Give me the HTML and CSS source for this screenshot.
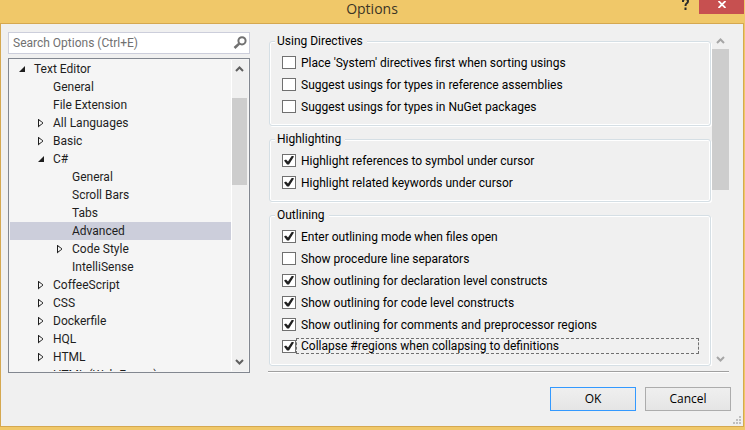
FILE: index.html
```html
<!DOCTYPE html>
<html lang="en">
<head>
<meta charset="utf-8">
<title>Options</title>
<link rel="stylesheet" href="styles.css">
</head>
<body>
<div class="window">
  <header class="titlebar">
    <h1 class="title">Options</h1>
    <div class="caption-buttons">
      <button class="help" type="button" aria-label="Help"><svg width="7" height="10" viewBox="0 0 7 10"><path d="M1 2V1Q1 -1 3.500 -1Q6 -1 6 1.200Q6 2.600 4.600 3.500Q3.500 4.200 3.500 6M3.500 7.500V10" fill="none" stroke="#2b2b2b" stroke-width="2"/></svg></button>
      <button class="close" type="button" aria-label="Close"><svg width="8" height="7" viewBox="0 0 8 7"><path d="M0.500 0L7.500 7M7.500 0L0.500 7" stroke="#fff" stroke-width="1.800"/></svg></button>
    </div>
  </header>
  <form class="client">
    <div class="columns">
      <div class="nav">
        <div class="search">
          <input class="search-input" type="text" placeholder="Search Options (Ctrl+E)" aria-label="Search Options">
          <svg class="search-icon" width="14" height="14" viewBox="0 0 14 14"><circle cx="9" cy="4.800" r="3.600" fill="none" stroke="#717171" stroke-width="2"/><path d="M6.200 7.600L1.500 12" stroke="#717171" stroke-width="2.600"/></svg>
        </div>
        <div class="tree">
          <ul class="items" role="tree">
            <li class="item l0 open" role="treeitem">Text Editor</li>
            <li class="item l1" role="treeitem">General</li>
            <li class="item l1" role="treeitem">File Extension</li>
            <li class="item l1 shut" role="treeitem">All Languages</li>
            <li class="item l1 shut" role="treeitem">Basic</li>
            <li class="item l1 open" role="treeitem">C#</li>
            <li class="item l2" role="treeitem">General</li>
            <li class="item l2" role="treeitem">Scroll Bars</li>
            <li class="item l2" role="treeitem">Tabs</li>
            <li class="item l2 selected" role="treeitem" aria-selected="true">Advanced</li>
            <li class="item l2 shut" role="treeitem">Code Style</li>
            <li class="item l2" role="treeitem">IntelliSense</li>
            <li class="item l1 shut" role="treeitem">CoffeeScript</li>
            <li class="item l1 shut" role="treeitem">CSS</li>
            <li class="item l1 shut" role="treeitem">Dockerfile</li>
            <li class="item l1 shut" role="treeitem">HQL</li>
            <li class="item l1 shut" role="treeitem">HTML</li>
            <li class="item l1" role="treeitem">HTML (Web Forms)</li>
          </ul>
          <div class="scrollbar tree-scroll">
            <svg class="arrow" width="9" height="6" viewBox="0 0 9 6"><path d="M1 5L4.500 1.500L8 5" fill="none" stroke="#606060" stroke-width="2"/></svg>
            <div class="track"><div class="thumb"></div></div>
            <svg class="arrow" width="9" height="6" viewBox="0 0 9 6"><path d="M1 1L4.500 4.500L8 1" fill="none" stroke="#606060" stroke-width="2"/></svg>
          </div>
        </div>
      </div>
      <div class="page">
        <div class="groups">
          <fieldset class="group">
            <legend>Using Directives</legend>
            <label class="option"><input type="checkbox"><span>Place 'System' directives first when sorting usings</span></label>
            <label class="option"><input type="checkbox"><span>Suggest usings for types in reference assemblies</span></label>
            <label class="option"><input type="checkbox"><span>Suggest usings for types in NuGet packages</span></label>
          </fieldset>
          <fieldset class="group">
            <legend>Highlighting</legend>
            <label class="option"><input type="checkbox" checked><span>Highlight references to symbol under cursor</span></label>
            <label class="option"><input type="checkbox" checked><span>Highlight related keywords under cursor</span></label>
          </fieldset>
          <fieldset class="group">
            <legend>Outlining</legend>
            <label class="option"><input type="checkbox" checked><span>Enter outlining mode when files open</span></label>
            <label class="option"><input type="checkbox"><span>Show procedure line separators</span></label>
            <label class="option"><input type="checkbox" checked><span>Show outlining for declaration level constructs</span></label>
            <label class="option"><input type="checkbox" checked><span>Show outlining for code level constructs</span></label>
            <label class="option"><input type="checkbox" checked><span>Show outlining for comments and preprocessor regions</span></label>
            <label class="option focused"><input type="checkbox" checked><span>Collapse #regions when collapsing to definitions</span></label>
          </fieldset>
        </div>
        <div class="scrollbar page-scroll">
          <svg class="arrow" width="9" height="6" viewBox="0 0 9 6"><path d="M1 5L4.500 1.500L8 5" fill="none" stroke="#a6a6a6" stroke-width="2"/></svg>
          <div class="track"><div class="thumb"></div></div>
          <svg class="arrow" width="9" height="6" viewBox="0 0 9 6"><path d="M1 1L4.500 4.500L8 1" fill="none" stroke="#a6a6a6" stroke-width="2"/></svg>
        </div>
      </div>
    </div>
    <footer class="actions">
      <button class="action default" type="button">OK</button>
      <button class="action" type="button">Cancel</button>
    </footer>
    <svg class="grip" width="8" height="8" viewBox="0 0 8 8"><path d="M6 0h2v2h-2zM3 3h2v2h-2zM6 3h2v2h-2zM0 6h2v2h-2zM3 6h2v2h-2zM6 6h2v2h-2z" fill="#bfbfbf"/></svg>
  </form>
</div>
</body>
</html>
```
FILE: styles.css
```css
* { box-sizing: border-box; }

body {
  margin: 0;
  background: #f0c869;
  color: #000;
  font: 12px/18px Roboto, "Segoe UI", sans-serif;
}

button, input { font: inherit; color: inherit; }

.window {
  display: flex;
  flex-direction: column;
  min-height: 100vh;
  padding: 0 1px 3px 0;
}

.titlebar {
  display: grid;
  grid-template-columns: 1fr auto 1fr;
  height: 23px;
}

.title {
  grid-column: 2;
  margin: 0;
  font-family: "Open Sans", "Segoe UI", sans-serif;
  font-size: 14px;
  font-weight: 400;
  line-height: 17px;
  color: #3b3526;
}

.caption-buttons {
  display: flex;
  justify-content: flex-end;
  align-items: flex-start;
}

.help, .close {
  display: flex;
  justify-content: center;
  border: 0;
  padding: 0;
  background: none;
}

.help { width: 28px; }

.close {
  width: 45px;
  height: 14px;
  padding-top: 1px;
  background: #c75050;
}

.client {
  position: relative;
  flex: 1;
  display: flex;
  flex-direction: column;
  border: 1px solid #d5a850;
  background: #f0f0f0;
}

.columns {
  display: grid;
  grid-template-columns: 242px 1fr;
  gap: 18px;
  padding: 8px 14px 0 7px;
}

.nav {
  display: flex;
  flex-direction: column;
  gap: 4px;
}

.search {
  display: flex;
  align-items: center;
  height: 22px;
  padding: 0 2px 0 4px;
  border: 1px solid #cccedb;
  background: #fff;
}

.search-input {
  flex: 1;
  min-width: 0;
  padding: 0;
  border: 0;
  outline: 0;
  background: none;
}

.search-input::placeholder { color: #717171; }

.tree {
  display: flex;
  height: 315px;
  padding: 1px;
  border: 1px solid #828790;
  background: #f5f5f5;
}

.items {
  flex: 1;
  height: 311px;
  margin: 0;
  padding: 0;
  overflow: hidden;
  list-style: none;
  color: #1e1e1e;
}

.item {
  display: flex;
  align-items: center;
  height: 18px;
}

.item::before {
  content: "";
  width: 6px;
  height: 9px;
  margin: 0 9px 0 9px;
}

.l0 { padding-left: 0; }
.l1 { padding-left: 19px; }
.l2 { padding-left: 38px; }

.open::before {
  height: 6px;
  background: #1e1e1e;
  clip-path: polygon(100% 0, 100% 100%, 0 100%);
}

.shut::before {
  background: #1e1e1e;
  clip-path: polygon(0 0, 5px 4px, 5px 5px, 0 9px, 0 0, 1px 2px, 1px 7px, 4px 5px, 4px 4px, 1px 2px);
}

.selected { background: #cccedb; }

.scrollbar {
  display: flex;
  flex-direction: column;
  align-items: center;
  background: #f0f0f0;
}

.track {
  flex: 1;
  width: 100%;
}

.thumb { background: #cdcdcd; }

.tree-scroll {
  width: 17px;
  padding: 6px 1px 6px 0;
  border-left: 1px solid #fff;
}

.tree-scroll .track { padding-top: 26px; }
.tree-scroll .thumb { height: 87px; }

.page {
  display: grid;
  grid-template-columns: 1fr 17px;
  height: 341px;
  border-bottom: 1px solid #fff;
  box-shadow: inset 0 -1px #a0a0a0;
}

.groups {
  height: 334px;
  padding: 0 1px 0 1px;
  overflow: hidden;
}

.group {
  margin: 0 0 4px;
  padding: 1px 11px 8px 12px;
  border: 1px solid #d5dfe5;
  border-radius: 3px;
  box-shadow: inset 0 0 0 1px #fff, 1px 1px #fff;
}

.group legend {
  height: 18px;
  margin-left: -7px;
  padding: 0 4px 0 2px;
  background: #f0f0f0;
}

.option {
  display: flex;
  align-items: center;
  height: 22px;
}

.option input {
  appearance: none;
  flex: none;
  width: 14px;
  height: 13px;
  margin: 0;
  border: 1px solid #707070;
  background: #fff;
}

.option input:checked::before {
  content: "";
  display: block;
  width: 10px;
  height: 9px;
  margin: 1px;
  background: #212121;
  clip-path: polygon(0 5px, 2px 4px, 4px 6px, 8px 0, 10px 1px, 5px 9px, 3px 9px);
}

.option span {
  flex: 1;
  padding: 1px 0 0 5px;
  line-height: 14px;
  white-space: nowrap;
}

.focused span {
  padding: 0 0 0 4px;
  border: 1px dashed #707070;
}

.page-scroll {
  height: 334px;
  padding: 6px 0 4px;
}

.page-scroll .track { padding-top: 5px; }
.page-scroll .thumb { height: 141px; }

.actions {
  display: flex;
  justify-content: flex-end;
  gap: 9px;
  padding: 14px 12px;
}

.action {
  width: 86px;
  height: 24px;
  padding: 0;
  border: 1px solid #acacac;
  background: linear-gradient(#efefef, #e5e5e5);
  font-family: "Open Sans", "Segoe UI", sans-serif;
}

.default { border-color: #3399ff; }

.grip {
  position: absolute;
  right: 2px;
  bottom: 2px;
}
```
